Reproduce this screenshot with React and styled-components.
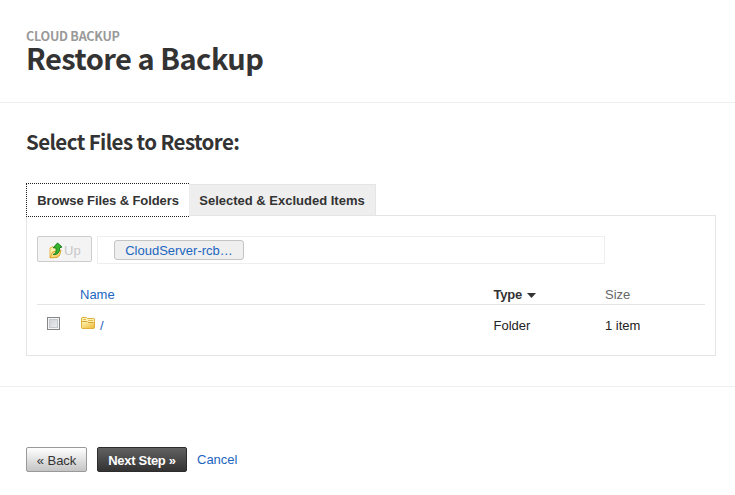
import React from "react";
import styled, { createGlobalStyle } from "styled-components";

const GlobalStyle = createGlobalStyle`
  * { box-sizing: border-box; }
  html { background: #fff; }
  body {
    margin: 0;
    background: #fff;
    color: #333;
    font: 13px/16px "Liberation Sans", Arial, sans-serif;
  }
  button { font: inherit; padding: 0; margin: 0; }
`;

const Page = styled.main`
  width: 735px;
  height: 495px;
  overflow: hidden;
  white-space: nowrap;
`;

const Header = styled.header`
  height: 103px;
  padding: 28px 26px 0;
  border-bottom: 1px solid #eee;
  font-family: "Noto Sans CJK SC", sans-serif;
  font-weight: 700;
`;

const Eyebrow = styled.div`
  height: 16px;
  font-size: 12.5px;
  line-height: 16px;
  letter-spacing: -0.22px;
  color: #999;
`;

const Title = styled.h1`
  margin: 0;
  height: 26px;
  font-size: 29px;
  line-height: 26px;
  font-weight: 700;
  letter-spacing: -0.5px;
`;

const Content = styled.section`
  height: 284px;
  padding: 24px 19px 0 26px;
  border-bottom: 1px solid #eee;
`;

const SectionTitle = styled.h2`
  margin: 0 0 28px;
  height: 28px;
  font: 700 20.5px/28px "Noto Sans CJK SC", sans-serif;
  letter-spacing: -0.6px;
`;

const Tabs = styled.div`
  display: flex;
  height: 34px;
  margin-bottom: -2px;
`;

const Tab = styled.button`
  position: relative;
  z-index: ${(p) => (p.$active ? 1 : 0)};
  width: ${(p) => p.$width}px;
  height: ${(p) => (p.$active ? 34 : 32)}px;
  margin-top: ${(p) => (p.$active ? 0 : 1)}px;
  padding-top: ${(p) => (p.$active ? 1 : 2)}px;
  border: ${(p) => (p.$active ? "1px dotted #222" : "1px solid #e5e5e5")};
  border-left-width: ${(p) => (p.$active ? 1 : 0)}px;
  border-right-width: ${(p) => (p.$active ? 0 : 1)}px;
  background: ${(p) => (p.$active ? "#fff" : "#eee")};
  color: #333;
  font-weight: 700;
  letter-spacing: ${(p) => p.$spacing}px;
`;

const Panel = styled.div`
  height: 141px;
  padding: 20px 10px 0;
  border: 1px solid #e5e5e5;
`;

const Toolbar = styled.div`
  display: flex;
  gap: 5px;
  height: 28px;
`;

const UpButton = styled.button`
  display: flex;
  align-items: center;
  width: 55px;
  height: 26px;
  padding: 3px 0 0 11px;
  border: 1px solid #ccc;
  border-radius: 2px;
  background: #f4f4f4;
  color: #c8c8c8;
`;

const Path = styled.div`
  width: 508px;
  padding: 3px 16px;
  border: 1px solid #eee;
`;

const Crumb = styled.button`
  display: block;
  width: 130px;
  height: 20px;
  padding-top: 1px;
  border: 1px solid #c4c4c4;
  border-radius: 3px;
  background: #efefef;
  color: #1c66c0;
  line-height: 18px;
`;

const Row = styled.div`
  display: grid;
  grid-template-columns: 43px 413.5px 111.5px 1fr;
  align-items: center;
  height: ${(p) => (p.$head ? 41 : 42)}px;
  padding-top: ${(p) => (p.$head ? 21 : 0)}px;
  border-bottom: ${(p) => (p.$head ? "1px solid #e5e5e5" : "0")};
  color: ${(p) => (p.$head ? "#666" : "#222")};
`;

const Link = styled.a`
  color: #1c66c0;
`;

const Sorted = styled.span`
  display: flex;
  align-items: center;
  color: #333;
  font-weight: 700;
  letter-spacing: -0.2px;
  svg { margin: 1px 0 0 5px; }
`;

const Checkbox = styled.span`
  display: block;
  width: 13px;
  height: 13px;
  margin: -5px 0 0 10px;
  border: 1px solid #858686;
  background: linear-gradient(135deg, #c8ccd2, #f2f2f2);
  box-shadow: inset 0 0 0 1px #f4f4f4, inset 0 0 0 2px #c4c8cc;
`;

const NameCell = styled.div`
  display: flex;
  align-items: center;
  svg { margin: -6px 5px 0 1px; }
`;

const Footer = styled.footer`
  display: flex;
  align-items: flex-start;
  gap: 10px;
  padding: 60px 26px 0;
`;

const Button = styled.button`
  width: ${(p) => (p.$primary ? 90 : 61)}px;
  height: 25px;
  padding-top: 2px;
  border: 1px solid ${(p) => (p.$primary ? "#2c2c2c" : "#999")};
  border-radius: 2px;
  background: ${(p) =>
    p.$primary
      ? "linear-gradient(#616161, #333)"
      : "linear-gradient(#fff, #c4c4c4)"};
  color: ${(p) => (p.$primary ? "#fff" : "#333")};
  font-weight: ${(p) => (p.$primary ? 700 : 400)};
  letter-spacing: ${(p) => (p.$primary ? -0.3 : 0)}px;
`;

const Cancel = styled(Link)`
  margin-top: 5px;
`;

const UpIcon = () => (
  <svg width="15" height="18" viewBox="0 0 15 18">
    <defs>
      <linearGradient id="upFolder" x2="1" y2="1">
        <stop stopColor="#fff6b8" />
        <stop offset="1" stopColor="#ecc048" />
      </linearGradient>
    </defs>
    <path d="M1 15.500V6l3-1.500 1.500 1.500L9 5.500V14z" fill="#fff3ac" stroke="#e2b94a" />
    <path d="M1 15.800 3.500 10l8.500-2-1.500 5.500-2.500 2z" fill="url(#upFolder)" stroke="#dba52a" />
    <path d="M4 12.500C7 12 7.500 9.500 7 5.800H4.200L8.500 1l4.500 4-2.500.8C11 10 8.500 13 4 12.500z" fill="#38b52c" stroke="#16801f" strokeWidth="1" />
  </svg>
);

const FolderIcon = () => (
  <svg width="14" height="12" viewBox="0 0 14 12">
    <defs>
      <linearGradient id="folderBody" x2="1" y2="1">
        <stop stopColor="#fff3ae" />
        <stop offset="1" stopColor="#edbb3d" />
      </linearGradient>
    </defs>
    <path d="M.5 11V1L1 .5h4.500l1 1h6.500l.5.5v9l-.5.5H1z" fill="#fff2b2" stroke="#dfb040" />
    <path d="M2 2.500h3M7 3.500h5" fill="none" stroke="#e5ba52" />
    <path d="M1 5h5l1.200 1.200L13 5v6H1z" fill="url(#folderBody)" />
    <path d="M1 4.500h5l1 1h5.500" fill="none" stroke="#d3a33a" />
  </svg>
);

const SortArrow = () => (
  <svg width="9" height="5" viewBox="0 0 9 5">
    <path d="M0 0h9L4.500 5z" fill="#333" />
  </svg>
);

export default function App() {
  return (
    <Page>
      <GlobalStyle />
      <Header>
        <Eyebrow>CLOUD BACKUP</Eyebrow>
        <Title>Restore a Backup</Title>
      </Header>
      <Content>
        <SectionTitle>Select Files to Restore:</SectionTitle>
        <Tabs>
          <Tab $active $width={163} $spacing={-0.1}>Browse Files &amp; Folders</Tab>
          <Tab $width={187} $spacing={0}>Selected &amp; Excluded Items</Tab>
        </Tabs>
        <Panel>
          <Toolbar>
            <UpButton disabled><UpIcon />Up</UpButton>
            <Path><Crumb>CloudServer-rcb…</Crumb></Path>
          </Toolbar>
          <Row $head>
            <span />
            <Link>Name</Link>
            <Sorted>Type<SortArrow /></Sorted>
            <span>Size</span>
          </Row>
          <Row>
            <Checkbox role="checkbox" aria-checked="false" />
            <NameCell><FolderIcon /><Link>/</Link></NameCell>
            <span>Folder</span>
            <span>1 item</span>
          </Row>
        </Panel>
      </Content>
      <Footer>
        <Button>« Back</Button>
        <Button $primary>Next Step »</Button>
        <Cancel>Cancel</Cancel>
      </Footer>
    </Page>
  );
}
